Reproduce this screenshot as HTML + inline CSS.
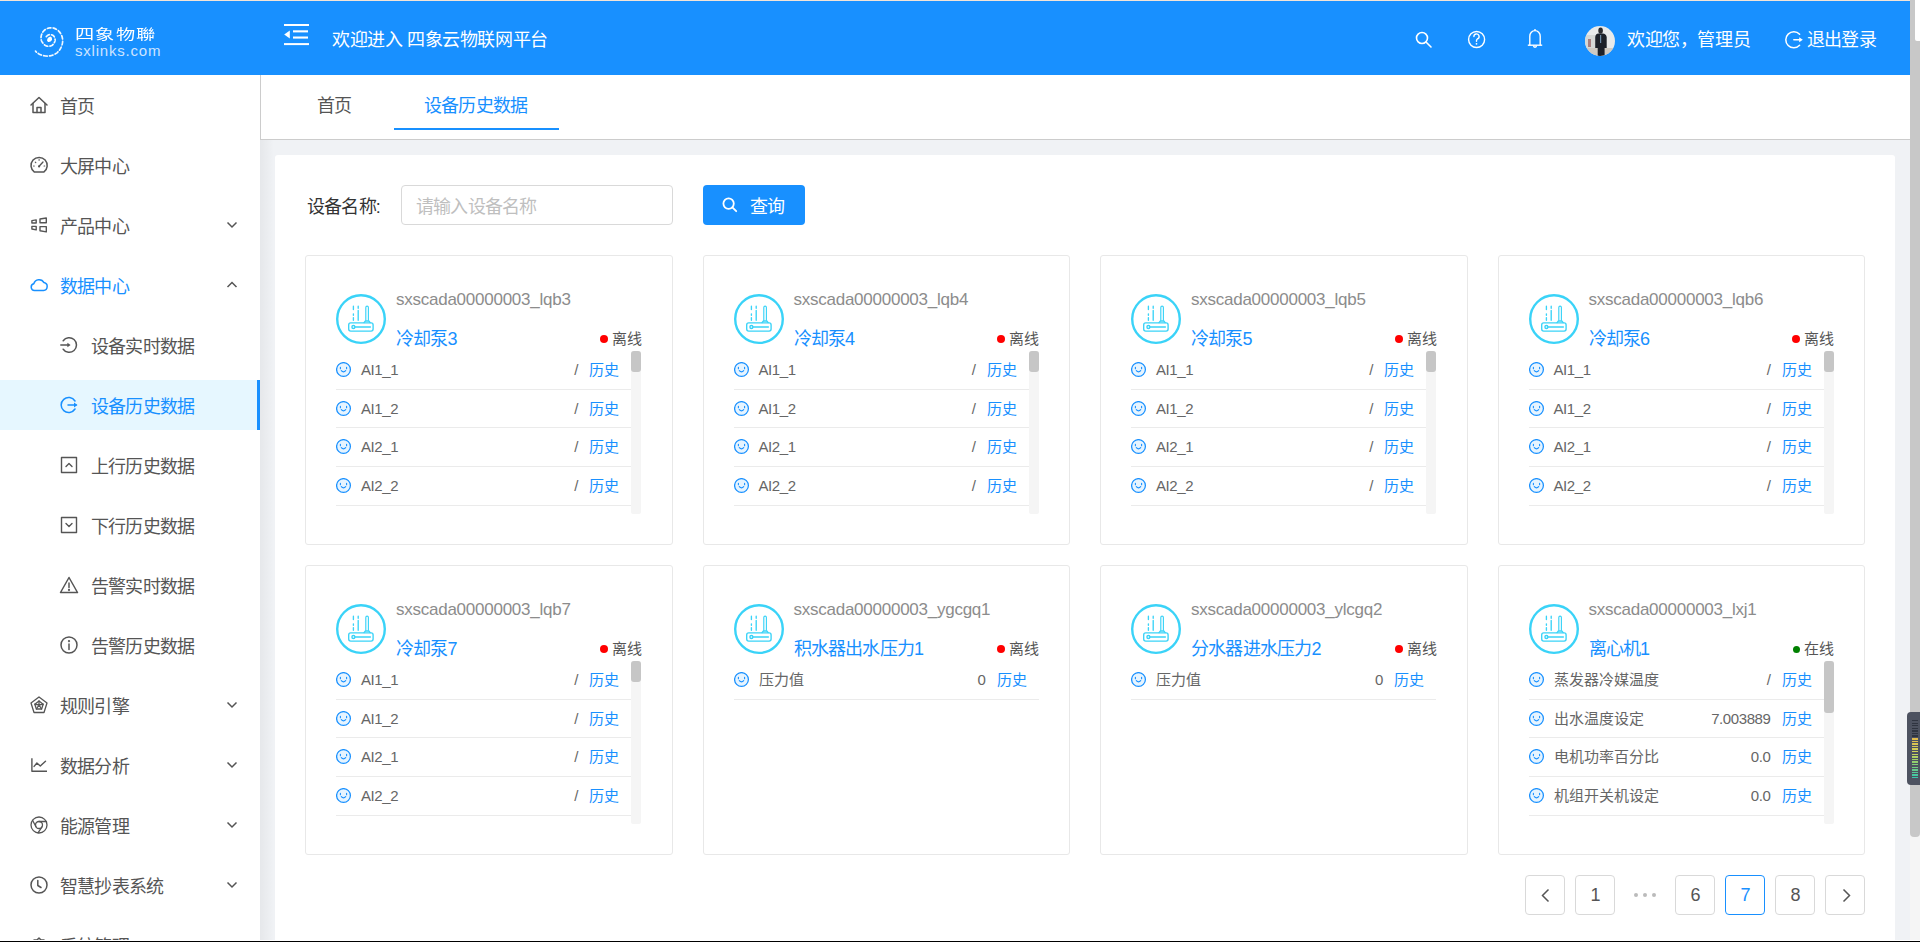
<!DOCTYPE html>
<html lang="zh-CN"><head><meta charset="utf-8"><style>*{box-sizing:border-box;margin:0;padding:0}
html,body{width:1920px;height:942px;overflow:hidden;background:#f0f2f5;font-family:"Liberation Sans",sans-serif;position:relative}
.abs{position:absolute}
#topline{left:0;top:0;width:1910px;height:1px;background:#f2e4d8}
#header{left:0;top:1px;width:1910px;height:74px;background:#1890ff;color:#fff}
#sidebar{left:0;top:75px;width:260px;height:867px;background:#fff}
.mi{position:absolute;left:0;width:260px;height:50px;font-size:18px;letter-spacing:-.8px;color:#555;line-height:50px;white-space:nowrap}
.mi .tx{position:absolute;left:60px;top:2px}
.mi.sub .tx{left:91px}
.mi svg{position:absolute}
.mi .chev{left:226px;top:20px}
.mi.sel,.mi.act{color:#1890ff}
.mi.sel{background:#e6f7ff}
.mi.sel:after{content:"";position:absolute;right:0;top:0;width:3px;height:50px;background:#1890ff}
#tabs{left:260px;top:75px;width:1650px;height:65px;background:#fff;border-left:1px solid #ccc;border-bottom:1px solid #ccc}
#shadow{left:260px;top:140px;width:14px;height:802px;background:linear-gradient(to right,rgba(0,0,0,.045),rgba(0,0,0,0))}
#main{left:275px;top:155px;width:1620px;height:800px;background:#fff;border-radius:3px}
#track{left:1910px;top:0;width:10px;height:942px;background:#f5f5f5}
#thumb{left:1910px;top:0;width:10px;height:837px;background:#c8c8c8;border-radius:0 0 4px 4px}
#botline{left:0;top:940px;width:1920px;height:2px;background:linear-gradient(#fff 50%,#000 50%)}
.card{position:absolute;width:367.5px;height:290px;border:1px solid #e8e8e8;border-radius:3px;background:#fff}
.card .ic{position:absolute;left:29px;top:38px}
.card .code{position:absolute;left:90px;top:34px;font-size:17px;color:#8c8c8c;white-space:nowrap;letter-spacing:-0.25px}
.card .name{position:absolute;left:90px;top:72px;font-size:18px;letter-spacing:-.8px;color:#1890ff;white-space:nowrap;line-height:22px}
.card .st{position:absolute;right:30px;top:74px;font-size:15px;color:#555;white-space:nowrap;line-height:18px}
.card .st i{display:inline-block;width:8px;height:8px;border-radius:4px;background:#f00;margin-right:4px;vertical-align:1px}
.card .st.on i{background:#008000;width:7px;height:7px}
.card .list{position:absolute;left:30px;top:95px;width:305px;height:163px;overflow:hidden}
.card .list.ns .row{width:305px}
.card .sb{position:absolute;right:0;top:0;width:10px;height:163px;background:#f5f5f5;border-radius:2px}
.card .sb b{position:absolute;left:0;top:0;width:10px;border-radius:3px;background:#c6c6c6}
.row{position:relative;width:295px;height:38.667px;border-bottom:1px solid #ebebeb;font-size:15px;color:#666;white-space:nowrap}
.row svg{position:absolute;left:0;top:11px}
.row .lb{position:absolute;left:25px;top:10px;line-height:18px}
.row .lb.lat,.row .vl{font-size:15px;letter-spacing:-.4px}
.row .vl{position:absolute;right:53px;top:10px;line-height:18px}
.row .hs{position:absolute;right:12px;top:10px;line-height:18px;color:#1890ff;font-size:15px}
.pg{position:absolute;top:875px;width:40px;height:40px;border:1px solid #d9d9d9;border-radius:4px;background:#fff;font-size:18px;letter-spacing:-.8px;color:#555;text-align:center;line-height:38px}
</style></head><body>
<div id="topline" class="abs"></div>
<div id="header" class="abs">
<svg class="abs" style="left:30px;top:20px" width="40" height="40" viewBox="0 0 40 40">
 <path d="M16.28 15.60 L16.44 15.42 L16.61 15.26 L16.78 15.10 L16.96 14.95 L17.14 14.79 L17.32 14.63 L17.51 14.48 L17.71 14.33 L17.92 14.20 L18.14 14.08 L18.37 13.97 L18.61 13.87 L18.85 13.79 L19.10 13.72 L19.36 13.66 L19.62 13.62 L19.88 13.60 L20.15 13.58 L20.43 13.59 L20.70 13.61 L20.97 13.64 L21.25 13.69 L21.52 13.76 L21.79 13.85 L22.06 13.94 L22.32 14.06 L22.58 14.19 L22.83 14.34 L23.07 14.50 L23.31 14.68 L23.54 14.87 L23.74 15.09 L23.94 15.32 L24.12 15.56 L24.28 15.82 L24.43 16.08 L24.57 16.35 L24.69 16.63 L24.80 16.92 L24.89 17.22 L24.97 17.52 L25.02 17.82 L25.06 18.13 L25.09 18.45 L25.09 18.76 L25.08 19.08 L25.05 19.39 L25.00 19.71 L24.93 20.02 L24.85 20.33 L24.75 20.64 L24.63 20.94 L24.49 21.23 L24.35 21.53 L24.22 21.84 L24.06 22.14 L23.88 22.43 L23.69 22.72 L23.47 22.99 L23.24 23.26 L22.99 23.51 L22.73 23.76 L22.45 23.99 L22.15 24.20 L21.84 24.40 L21.51 24.58 L21.17 24.74 L20.82 24.89 L20.45 25.02 L20.08 25.12 L19.70 25.21 L19.31 25.27 L18.91 25.31 L18.51 25.33 L18.11 25.30 L17.72 25.24 L17.32 25.16 L16.93 25.06 L16.54 24.93 L16.15 24.79 L15.78 24.62 L15.41 24.43 L15.05 24.21 L14.71 23.98 L14.37 23.73 L14.05 23.45 L13.75 23.16 L13.46 22.85 L13.18 22.52 L12.93 22.18 L12.69 21.82 L12.47 21.45 L12.23 21.08 L12.00 20.69 L11.80 20.29 L11.61 19.87 L11.45 19.44 L11.31 18.99 L11.20 18.53 L11.11 18.06 L11.05 17.59 L11.02 17.10 L11.02 16.61 L11.04 16.12 L11.09 15.62 L11.18 15.12 L11.29 14.62 L11.43 14.13 L11.58 13.62 L11.75 13.12 L11.95 12.61 L12.19 12.12 L12.45 11.63 L12.75 11.16 L13.08 10.69 L13.44 10.24 L13.84 9.81 L14.26 9.40 L14.71 9.01 L15.18 8.64 L15.69 8.30 L16.23 8.00 L16.78 7.74 L17.36 7.50 L17.96 7.30 L18.57 7.13 L19.19 6.99 L19.83 6.89 L20.48 6.82 L21.14 6.80 L21.80 6.81 L22.46 6.86 L23.13 6.96 L23.78 7.14 L24.41 7.35 L25.04 7.61 L25.65 7.89 L26.25 8.22 L26.84 8.58 L27.40 8.97 L27.94 9.40 L28.46 9.85 L28.95 10.34 L29.42 10.86 L29.87 11.39 L30.29 11.96 L30.67 12.55 L31.03 13.16 L31.35 13.80 L31.64 14.45 L31.89 15.13 L32.10 15.82 L32.27 16.52 L32.41 17.23 L32.51 17.96 L32.59 18.69 L32.62 19.43 L32.62 20.18 L32.57 20.93 L32.48 21.68 L32.35 22.42 L32.17 23.17 L31.95 23.90 L31.69 24.63 L31.40 25.35 L31.13 26.11 L30.81 26.85 L30.44 27.58 L30.03 28.30 L29.57 29.00 L29.06 29.68 L28.51 30.33 L27.92 30.96 L27.28 31.56 L26.59 32.10 L25.86 32.60 L25.09 33.05 L24.29 33.47 L23.47 33.84 L22.61 34.17 L21.74 34.45 L20.84 34.68 L19.92 34.85 L18.99 34.98 L18.04 35.04 L17.09 35.06 L16.13 35.02 L15.16 34.92 L14.20 34.77 L13.24 34.56 L12.29 34.30 L11.34 33.98 L10.41 33.60 L9.50 33.17 L8.61 32.68 L7.74 32.14 L6.90 31.55 L6.16 30.83 L5.48 30.06" fill="none" stroke="#fff" stroke-width="1.7" stroke-dasharray="3.6 2.3" stroke-linecap="round" opacity=".95"/>
 <path d="M17 19.5 Q17.5 16 20.5 15.6 Q22.6 16.6 22 19 Q20.5 21.5 18 21 Z" fill="#fff"/>
</svg>
<div class="abs" style="left:75px;top:25px;font-size:16px;line-height:20px;letter-spacing:.9px;transform:scale(1.2,.88);transform-origin:0 0;white-space:nowrap">四象物聯</div>
<div class="abs" style="left:75px;top:41px;font-size:15px;line-height:17px;color:#cde4ff;letter-spacing:0.8px">sxlinks.com</div>
<svg class="abs" style="left:283px;top:22px" width="28" height="24" viewBox="0 0 28 24">
 <rect x="1" y="1" width="25" height="2" fill="#fff"/>
 <rect x="10" y="7.3" width="15" height="2.1" fill="#fff"/>
 <rect x="10" y="13.5" width="15" height="2.1" fill="#fff"/>
 <rect x="1" y="20.1" width="25" height="2" fill="#fff"/>
 <path d="M1.2 11.5 L6.8 7.5 V15.5 Z" fill="#fff"/>
</svg>
<div class="abs" style="left:332px;top:27px;font-size:18px;letter-spacing:-.4px;line-height:24px;white-space:nowrap">欢迎进入 四象云物联网平台</div>
<svg class="abs" style="left:1412px;top:28px" width="24" height="22" viewBox="0 0 24 22"><g fill="none" stroke="#fff" stroke-width="1.6" stroke-linecap="round"><circle cx="10" cy="9" r="5.5"/><path d="M14 13 L19 18"/></g></svg>
<svg class="abs" style="left:1466px;top:27px" width="22" height="22" viewBox="0 0 22 22"><g fill="none" stroke="#fff" stroke-width="1.4" stroke-linecap="round"><circle cx="10.6" cy="11.5" r="8.0"/><path d="M7.9 8.6 A2.6 2.6 0 1 1 11.3 11 Q10.5 11.5 10.5 12.8 V13.3"/></g><circle cx="10.5" cy="15.8" r=".9" fill="#fff"/></svg>
<svg class="abs" style="left:1525px;top:26px" width="20" height="23" viewBox="0 0 20 23"><g fill="none" stroke="#fff" stroke-width="1.4" stroke-linejoin="round"><path d="M4.8 18.2 V9.2 A5.2 5.6 0 0 1 15.2 9.2 V18.2"/><path d="M2.8 18.2 H17.2"/><path d="M8.5 18.6 A1.5 1.6 0 0 0 11.5 18.6"/><path d="M10 2 V3.6"/></g></svg>
<svg class="abs" style="left:1585px;top:25px" width="30" height="30" viewBox="0 0 30 30">
 <defs><clipPath id="av"><circle cx="15" cy="15" r="15"/></clipPath></defs>
 <g clip-path="url(#av)">
  <rect width="30" height="30" fill="#e9eaea"/>
  <rect x="0" y="9" width="10" height="13" fill="#d6d8d6"/>
  <rect x="3" y="13" width="3" height="8" fill="#8a4444" opacity=".6"/>
  <rect x="0" y="22" width="30" height="8" fill="#cfcac2"/>
  <path d="M10.2 22 V11 Q10.5 8 13.5 7.6 H17.8 Q21 8 21.7 11 V22 H19.6 V30 H12.7 V22 Z" fill="#1d2129"/>
  <ellipse cx="15.6" cy="4.6" rx="2.3" ry="3.2" fill="#2a2b2f"/>
  <rect x="15" y="9" width="1.2" height="8" fill="#6b8aa6"/>
 </g>
</svg>
<div class="abs" style="left:1627px;top:27px;font-size:18px;letter-spacing:-.4px;line-height:24px;white-space:nowrap">欢迎您，管理员</div>
<svg class="abs" style="left:1784px;top:29px" width="22" height="21" viewBox="0 0 22 21"><g fill="none" stroke="#fff" stroke-width="1.5" stroke-linecap="round"><path d="M15.6 4.3 A8 8 0 1 0 15.6 15.3"/><path d="M9.8 9.8 H16"/></g><path d="M15.2 7.3 L18.8 9.8 L15.2 12.3 Z" fill="#fff"/></svg>
<div class="abs" style="left:1807px;top:27px;font-size:18px;letter-spacing:-.8px;line-height:24px;white-space:nowrap">退出登录</div>
</div>
<div id="sidebar" class="abs"><div class="mi" style="top:5px"><svg style="left:29px;top:15px" width="20" height="20" viewBox="0 0 20 20"><g fill="none" stroke="#555" stroke-width="1.5" stroke-linecap="round" stroke-linejoin="round"><path d="M2 10 L10 2.5 L18 10"/><path d="M4 8.5 V17.5 H16 V8.5"/><path d="M8 17.5 V12.5 H12 V17.5"/></g></svg><span class="tx">首页</span></div><div class="mi" style="top:65px"><svg style="left:29px;top:15px" width="20" height="20" viewBox="0 0 20 20"><g fill="none" stroke="#555" stroke-width="1.5" stroke-linecap="round" stroke-linejoin="round"><path d="M5.41 17.1 A8.1 8.1 0 1 1 14.79 17.1 Z"/><path d="M10.1 11.3 L14 7" stroke-width="1.3"/><path d="M4.6 11 h.6 M6.3 7.1 l.5 .5 M10.1 4.6 v.6 M15.1 11 h.6" stroke-width="1.2"/></g><circle cx="10.1" cy="11.4" r="1.1" fill="#555"/></svg><span class="tx">大屏中心</span></div><div class="mi" style="top:125px"><svg style="left:29px;top:15px" width="20" height="20" viewBox="0 0 20 20"><g fill="none" stroke="#555" stroke-width="1.4" stroke-linecap="round" stroke-linejoin="round"><path d="M2.9 5.6 L7.2 4.9 V8 H2.9 Z M11 4.0 L17.3 3.0 V7.8 H11 Z M2.9 11.4 H7.2 V14.9 L2.9 14 Z M11 11.6 H17.3 V16.9 L11 15.8 Z"/></g></svg><span class="tx">产品中心</span><svg class="chev" width="12" height="10" viewBox="0 0 12 10"><path d="M1.5 2.5 L6 7 L10.5 2.5" fill="none" stroke="#555" stroke-width="1.5"/></svg></div><div class="mi act" style="top:185px"><svg style="left:29px;top:15px" width="20" height="20" viewBox="0 0 20 20"><g fill="none" stroke="#1890ff" stroke-width="1.5" stroke-linecap="round" stroke-linejoin="round"><path d="M5.5 15.5 H14.5 A4 4 0 0 0 15 7.6 A5.5 5.5 0 0 0 4.8 8.8 A3.4 3.4 0 0 0 5.5 15.5 Z"/></g></svg><span class="tx">数据中心</span><svg class="chev" width="12" height="10" viewBox="0 0 12 10"><path d="M1.5 7 L6 2.5 L10.5 7" fill="none" stroke="#555" stroke-width="1.5"/></svg></div><div class="mi sub" style="top:245px"><svg style="left:59px;top:15px" width="20" height="20" viewBox="0 0 20 20"><g fill="none" stroke="#555" stroke-width="1.5" stroke-linecap="round" stroke-linejoin="round"><path d="M4.2 5.8 A7.3 7.3 0 1 1 4.2 14.2"/><path d="M1.8 10 H9"/></g><path d="M8.4 7.7 L11.6 10 L8.4 12.3 Z" fill="#555"/></svg><span class="tx">设备实时数据</span></div><div class="mi sub sel" style="top:305px"><svg style="left:59px;top:15px" width="20" height="20" viewBox="0 0 20 20"><g fill="none" stroke="#1890ff" stroke-width="1.5" stroke-linecap="round" stroke-linejoin="round"><path d="M16 6 A7.5 7.5 0 1 0 16 14"/><path d="M9 10 H17"/></g><path d="M15 7.5 L18.5 10 L15 12.5Z" fill="#1890ff"/></svg><span class="tx">设备历史数据</span></div><div class="mi sub" style="top:365px"><svg style="left:59px;top:15px" width="20" height="20" viewBox="0 0 20 20"><g fill="none" stroke="#555" stroke-width="1.4" stroke-linecap="round" stroke-linejoin="round"><rect x="2.5" y="2.5" width="15" height="15"/><path d="M7 11.5 L10 8.5 L13 11.5"/></g></svg><span class="tx">上行历史数据</span></div><div class="mi sub" style="top:425px"><svg style="left:59px;top:15px" width="20" height="20" viewBox="0 0 20 20"><g fill="none" stroke="#555" stroke-width="1.4" stroke-linecap="round" stroke-linejoin="round"><rect x="2.5" y="2.5" width="15" height="15"/><path d="M7 8.5 L10 11.5 L13 8.5"/></g></svg><span class="tx">下行历史数据</span></div><div class="mi sub" style="top:485px"><svg style="left:59px;top:15px" width="20" height="20" viewBox="0 0 20 20"><g fill="none" stroke="#555" stroke-width="1.5" stroke-linecap="round" stroke-linejoin="round"><path d="M10 2.5 L18.5 17.5 H1.5 Z"/><path d="M10 8 V12.5"/><circle cx="10" cy="15" r=".4"/></g></svg><span class="tx">告警实时数据</span></div><div class="mi sub" style="top:545px"><svg style="left:59px;top:15px" width="20" height="20" viewBox="0 0 20 20"><g fill="none" stroke="#555" stroke-width="1.5" stroke-linecap="round" stroke-linejoin="round"><circle cx="10" cy="10" r="8"/><path d="M10 9 V14.5"/><circle cx="10" cy="6.2" r=".4"/></g></svg><span class="tx">告警历史数据</span></div><div class="mi" style="top:605px"><svg style="left:29px;top:15px" width="20" height="20" viewBox="0 0 20 20"><g fill="none" stroke="#555" stroke-width="1.3" stroke-linecap="round" stroke-linejoin="round"><path d="M10 2 L18 8 L15 17.5 H5 L2 8 Z"/><path d="M10 6 L14.2 9.2 L12.6 14 H7.4 L5.8 9.2 Z"/><path d="M10 6 V10 M14.2 9.2 L10 10 M12.6 14 L10 10 M7.4 14 L10 10 M5.8 9.2 L10 10"/></g></svg><span class="tx">规则引擎</span><svg class="chev" width="12" height="10" viewBox="0 0 12 10"><path d="M1.5 2.5 L6 7 L10.5 2.5" fill="none" stroke="#555" stroke-width="1.5"/></svg></div><div class="mi" style="top:665px"><svg style="left:29px;top:15px" width="20" height="20" viewBox="0 0 20 20"><g fill="none" stroke="#555" stroke-width="1.4" stroke-linecap="round" stroke-linejoin="round"><path d="M2.9 3.3 V16.2 H18" stroke-linecap="butt"/><path d="M5.1 11.4 L7.9 8 L11.3 11 L16.5 6.2"/></g></svg><span class="tx">数据分析</span><svg class="chev" width="12" height="10" viewBox="0 0 12 10"><path d="M1.5 2.5 L6 7 L10.5 2.5" fill="none" stroke="#555" stroke-width="1.5"/></svg></div><div class="mi" style="top:725px"><svg style="left:29px;top:15px" width="20" height="20" viewBox="0 0 20 20"><g fill="none" stroke="#555" stroke-width="1.3" stroke-linecap="round" stroke-linejoin="round"><circle cx="10" cy="10" r="8"/><circle cx="10" cy="10" r="3.5"/><path d="M10 6.5 H17.5 M7 11.8 L3.5 5.2 M13 11.8 L9 17.8"/></g></svg><span class="tx">能源管理</span><svg class="chev" width="12" height="10" viewBox="0 0 12 10"><path d="M1.5 2.5 L6 7 L10.5 2.5" fill="none" stroke="#555" stroke-width="1.5"/></svg></div><div class="mi" style="top:785px"><svg style="left:29px;top:15px" width="20" height="20" viewBox="0 0 20 20"><g fill="none" stroke="#555" stroke-width="1.5" stroke-linecap="round" stroke-linejoin="round"><circle cx="10" cy="10" r="8"/><path d="M8.8 5.5 V10.5 L12 12.5"/></g></svg><span class="tx">智慧抄表系统</span><svg class="chev" width="12" height="10" viewBox="0 0 12 10"><path d="M1.5 2.5 L6 7 L10.5 2.5" fill="none" stroke="#555" stroke-width="1.5"/></svg></div><div class="mi" style="top:845px"><svg style="left:29px;top:15px" width="20" height="20" viewBox="0 0 20 20"><g fill="none" stroke="#555" stroke-width="1.5" stroke-linecap="round" stroke-linejoin="round"><path d="M10 3 L12 5 H15 V8 L17 10 L15 12 V15 H12 L10 17 L8 15 H5 V12 L3 10 L5 8 V5 H8 Z"/><circle cx="10" cy="10" r="2.5"/></g></svg><span class="tx">系统管理</span><svg class="chev" width="12" height="10" viewBox="0 0 12 10"><path d="M1.5 2.5 L6 7 L10.5 2.5" fill="none" stroke="#555" stroke-width="1.5"/></svg></div></div>
<div id="tabs" class="abs">
<div class="abs" style="left:56px;top:19px;font-size:18px;letter-spacing:-.8px;line-height:24px;color:#555">首页</div>
<div class="abs" style="left:163px;top:19px;font-size:18px;letter-spacing:-.8px;line-height:24px;color:#1890ff">设备历史数据</div>
<div class="abs" style="left:133px;top:53px;width:165px;height:2px;background:#1890ff"></div>
</div>
<div id="shadow" class="abs"></div>
<div id="main" class="abs">
<div class="abs" style="left:32px;top:40px;font-size:18px;letter-spacing:-.8px;line-height:24px;color:#333">设备名称:</div>
<div class="abs" style="left:126px;top:30px;width:272px;height:40px;border:1px solid #d9d9d9;border-radius:4px"></div>
<div class="abs" style="left:141px;top:40px;font-size:18px;letter-spacing:-.8px;line-height:24px;color:#bfbfbf">请输入设备名称</div>
<div class="abs" style="left:428px;top:30px;width:102px;height:40px;background:#1890ff;border-radius:4px"></div>
<svg class="abs" style="left:446px;top:41px" width="18" height="18" viewBox="0 0 18 18"><g fill="none" stroke="#fff" stroke-width="1.8" stroke-linecap="round"><circle cx="7.6" cy="7.6" r="5.2"/><path d="M11.4 11.4 L15.2 15.2"/></g></svg>
<div class="abs" style="left:475px;top:40px;font-size:18px;letter-spacing:-.8px;line-height:24px;color:#fff">查询</div>
</div>
<div class="card" style="left:305.0px;top:255px"><svg class="ic" width="52" height="52" viewBox="0 0 52 52"><circle cx="26" cy="25.1" r="23.8" fill="none" stroke="#3ad3f8" stroke-width="2.4"/><g fill="none" stroke="#3ad3f8" stroke-width="1.35" stroke-linecap="round"><rect x="13.7" y="28.9" width="24.4" height="8.2" rx="2"/><circle cx="18.4" cy="33" r="1.5"/><path d="M20 33 H35.4"/><path d="M29 28.6 l1.4 -1.6 h3.4 l1.4 1.6"/><path d="M18.4 12.2 V15.6 M18.4 19.8 V21.2 M18.4 23.6 V26.2"/><path d="M23.2 12.2 V14.2 M23.2 16.4 V26.2"/></g><path d="M30.8 26.8 V13.4 a1.3 1.3 0 0 1 2.6 0 V26.8" fill="none" stroke="#3ad3f8" stroke-width="1.15"/></svg><div class="code">sxscada00000003_lqb3</div><div class="name">冷却泵3</div><div class="st"><i></i>离线</div><div class="list"><div class="row"><svg width="16" height="16" viewBox="0 0 16 16"><circle cx="7.5" cy="7.5" r="6.9" fill="#e6f4ff" stroke="#1890ff" stroke-width="1.25"/><path d="M4.4 5.3 V6.7 M10.6 5.3 V6.7" stroke="#1890ff" stroke-width="1.1" stroke-linecap="round"/><path d="M5.3 8.6 Q7.5 11.2 9.7 8.6" fill="none" stroke="#1890ff" stroke-width="1.1" stroke-linecap="round"/></svg><span class="lb lat">AI1_1</span><span class="vl">/</span><span class="hs">历史</span></div><div class="row"><svg width="16" height="16" viewBox="0 0 16 16"><circle cx="7.5" cy="7.5" r="6.9" fill="#e6f4ff" stroke="#1890ff" stroke-width="1.25"/><path d="M4.4 5.3 V6.7 M10.6 5.3 V6.7" stroke="#1890ff" stroke-width="1.1" stroke-linecap="round"/><path d="M5.3 8.6 Q7.5 11.2 9.7 8.6" fill="none" stroke="#1890ff" stroke-width="1.1" stroke-linecap="round"/></svg><span class="lb lat">AI1_2</span><span class="vl">/</span><span class="hs">历史</span></div><div class="row"><svg width="16" height="16" viewBox="0 0 16 16"><circle cx="7.5" cy="7.5" r="6.9" fill="#e6f4ff" stroke="#1890ff" stroke-width="1.25"/><path d="M4.4 5.3 V6.7 M10.6 5.3 V6.7" stroke="#1890ff" stroke-width="1.1" stroke-linecap="round"/><path d="M5.3 8.6 Q7.5 11.2 9.7 8.6" fill="none" stroke="#1890ff" stroke-width="1.1" stroke-linecap="round"/></svg><span class="lb lat">AI2_1</span><span class="vl">/</span><span class="hs">历史</span></div><div class="row"><svg width="16" height="16" viewBox="0 0 16 16"><circle cx="7.5" cy="7.5" r="6.9" fill="#e6f4ff" stroke="#1890ff" stroke-width="1.25"/><path d="M4.4 5.3 V6.7 M10.6 5.3 V6.7" stroke="#1890ff" stroke-width="1.1" stroke-linecap="round"/><path d="M5.3 8.6 Q7.5 11.2 9.7 8.6" fill="none" stroke="#1890ff" stroke-width="1.1" stroke-linecap="round"/></svg><span class="lb lat">AI2_2</span><span class="vl">/</span><span class="hs">历史</span></div><div class="row"><svg width="16" height="16" viewBox="0 0 16 16"><circle cx="7.5" cy="7.5" r="6.9" fill="#e6f4ff" stroke="#1890ff" stroke-width="1.25"/><path d="M4.4 5.3 V6.7 M10.6 5.3 V6.7" stroke="#1890ff" stroke-width="1.1" stroke-linecap="round"/><path d="M5.3 8.6 Q7.5 11.2 9.7 8.6" fill="none" stroke="#1890ff" stroke-width="1.1" stroke-linecap="round"/></svg><span class="lb lat">AI3_1</span><span class="vl">/</span><span class="hs">历史</span></div><div class="sb"><b style="top:0px;height:21px"></b></div></div></div><div class="card" style="left:702.5px;top:255px"><svg class="ic" width="52" height="52" viewBox="0 0 52 52"><circle cx="26" cy="25.1" r="23.8" fill="none" stroke="#3ad3f8" stroke-width="2.4"/><g fill="none" stroke="#3ad3f8" stroke-width="1.35" stroke-linecap="round"><rect x="13.7" y="28.9" width="24.4" height="8.2" rx="2"/><circle cx="18.4" cy="33" r="1.5"/><path d="M20 33 H35.4"/><path d="M29 28.6 l1.4 -1.6 h3.4 l1.4 1.6"/><path d="M18.4 12.2 V15.6 M18.4 19.8 V21.2 M18.4 23.6 V26.2"/><path d="M23.2 12.2 V14.2 M23.2 16.4 V26.2"/></g><path d="M30.8 26.8 V13.4 a1.3 1.3 0 0 1 2.6 0 V26.8" fill="none" stroke="#3ad3f8" stroke-width="1.15"/></svg><div class="code">sxscada00000003_lqb4</div><div class="name">冷却泵4</div><div class="st"><i></i>离线</div><div class="list"><div class="row"><svg width="16" height="16" viewBox="0 0 16 16"><circle cx="7.5" cy="7.5" r="6.9" fill="#e6f4ff" stroke="#1890ff" stroke-width="1.25"/><path d="M4.4 5.3 V6.7 M10.6 5.3 V6.7" stroke="#1890ff" stroke-width="1.1" stroke-linecap="round"/><path d="M5.3 8.6 Q7.5 11.2 9.7 8.6" fill="none" stroke="#1890ff" stroke-width="1.1" stroke-linecap="round"/></svg><span class="lb lat">AI1_1</span><span class="vl">/</span><span class="hs">历史</span></div><div class="row"><svg width="16" height="16" viewBox="0 0 16 16"><circle cx="7.5" cy="7.5" r="6.9" fill="#e6f4ff" stroke="#1890ff" stroke-width="1.25"/><path d="M4.4 5.3 V6.7 M10.6 5.3 V6.7" stroke="#1890ff" stroke-width="1.1" stroke-linecap="round"/><path d="M5.3 8.6 Q7.5 11.2 9.7 8.6" fill="none" stroke="#1890ff" stroke-width="1.1" stroke-linecap="round"/></svg><span class="lb lat">AI1_2</span><span class="vl">/</span><span class="hs">历史</span></div><div class="row"><svg width="16" height="16" viewBox="0 0 16 16"><circle cx="7.5" cy="7.5" r="6.9" fill="#e6f4ff" stroke="#1890ff" stroke-width="1.25"/><path d="M4.4 5.3 V6.7 M10.6 5.3 V6.7" stroke="#1890ff" stroke-width="1.1" stroke-linecap="round"/><path d="M5.3 8.6 Q7.5 11.2 9.7 8.6" fill="none" stroke="#1890ff" stroke-width="1.1" stroke-linecap="round"/></svg><span class="lb lat">AI2_1</span><span class="vl">/</span><span class="hs">历史</span></div><div class="row"><svg width="16" height="16" viewBox="0 0 16 16"><circle cx="7.5" cy="7.5" r="6.9" fill="#e6f4ff" stroke="#1890ff" stroke-width="1.25"/><path d="M4.4 5.3 V6.7 M10.6 5.3 V6.7" stroke="#1890ff" stroke-width="1.1" stroke-linecap="round"/><path d="M5.3 8.6 Q7.5 11.2 9.7 8.6" fill="none" stroke="#1890ff" stroke-width="1.1" stroke-linecap="round"/></svg><span class="lb lat">AI2_2</span><span class="vl">/</span><span class="hs">历史</span></div><div class="row"><svg width="16" height="16" viewBox="0 0 16 16"><circle cx="7.5" cy="7.5" r="6.9" fill="#e6f4ff" stroke="#1890ff" stroke-width="1.25"/><path d="M4.4 5.3 V6.7 M10.6 5.3 V6.7" stroke="#1890ff" stroke-width="1.1" stroke-linecap="round"/><path d="M5.3 8.6 Q7.5 11.2 9.7 8.6" fill="none" stroke="#1890ff" stroke-width="1.1" stroke-linecap="round"/></svg><span class="lb lat">AI3_1</span><span class="vl">/</span><span class="hs">历史</span></div><div class="sb"><b style="top:0px;height:21px"></b></div></div></div><div class="card" style="left:1100.0px;top:255px"><svg class="ic" width="52" height="52" viewBox="0 0 52 52"><circle cx="26" cy="25.1" r="23.8" fill="none" stroke="#3ad3f8" stroke-width="2.4"/><g fill="none" stroke="#3ad3f8" stroke-width="1.35" stroke-linecap="round"><rect x="13.7" y="28.9" width="24.4" height="8.2" rx="2"/><circle cx="18.4" cy="33" r="1.5"/><path d="M20 33 H35.4"/><path d="M29 28.6 l1.4 -1.6 h3.4 l1.4 1.6"/><path d="M18.4 12.2 V15.6 M18.4 19.8 V21.2 M18.4 23.6 V26.2"/><path d="M23.2 12.2 V14.2 M23.2 16.4 V26.2"/></g><path d="M30.8 26.8 V13.4 a1.3 1.3 0 0 1 2.6 0 V26.8" fill="none" stroke="#3ad3f8" stroke-width="1.15"/></svg><div class="code">sxscada00000003_lqb5</div><div class="name">冷却泵5</div><div class="st"><i></i>离线</div><div class="list"><div class="row"><svg width="16" height="16" viewBox="0 0 16 16"><circle cx="7.5" cy="7.5" r="6.9" fill="#e6f4ff" stroke="#1890ff" stroke-width="1.25"/><path d="M4.4 5.3 V6.7 M10.6 5.3 V6.7" stroke="#1890ff" stroke-width="1.1" stroke-linecap="round"/><path d="M5.3 8.6 Q7.5 11.2 9.7 8.6" fill="none" stroke="#1890ff" stroke-width="1.1" stroke-linecap="round"/></svg><span class="lb lat">AI1_1</span><span class="vl">/</span><span class="hs">历史</span></div><div class="row"><svg width="16" height="16" viewBox="0 0 16 16"><circle cx="7.5" cy="7.5" r="6.9" fill="#e6f4ff" stroke="#1890ff" stroke-width="1.25"/><path d="M4.4 5.3 V6.7 M10.6 5.3 V6.7" stroke="#1890ff" stroke-width="1.1" stroke-linecap="round"/><path d="M5.3 8.6 Q7.5 11.2 9.7 8.6" fill="none" stroke="#1890ff" stroke-width="1.1" stroke-linecap="round"/></svg><span class="lb lat">AI1_2</span><span class="vl">/</span><span class="hs">历史</span></div><div class="row"><svg width="16" height="16" viewBox="0 0 16 16"><circle cx="7.5" cy="7.5" r="6.9" fill="#e6f4ff" stroke="#1890ff" stroke-width="1.25"/><path d="M4.4 5.3 V6.7 M10.6 5.3 V6.7" stroke="#1890ff" stroke-width="1.1" stroke-linecap="round"/><path d="M5.3 8.6 Q7.5 11.2 9.7 8.6" fill="none" stroke="#1890ff" stroke-width="1.1" stroke-linecap="round"/></svg><span class="lb lat">AI2_1</span><span class="vl">/</span><span class="hs">历史</span></div><div class="row"><svg width="16" height="16" viewBox="0 0 16 16"><circle cx="7.5" cy="7.5" r="6.9" fill="#e6f4ff" stroke="#1890ff" stroke-width="1.25"/><path d="M4.4 5.3 V6.7 M10.6 5.3 V6.7" stroke="#1890ff" stroke-width="1.1" stroke-linecap="round"/><path d="M5.3 8.6 Q7.5 11.2 9.7 8.6" fill="none" stroke="#1890ff" stroke-width="1.1" stroke-linecap="round"/></svg><span class="lb lat">AI2_2</span><span class="vl">/</span><span class="hs">历史</span></div><div class="row"><svg width="16" height="16" viewBox="0 0 16 16"><circle cx="7.5" cy="7.5" r="6.9" fill="#e6f4ff" stroke="#1890ff" stroke-width="1.25"/><path d="M4.4 5.3 V6.7 M10.6 5.3 V6.7" stroke="#1890ff" stroke-width="1.1" stroke-linecap="round"/><path d="M5.3 8.6 Q7.5 11.2 9.7 8.6" fill="none" stroke="#1890ff" stroke-width="1.1" stroke-linecap="round"/></svg><span class="lb lat">AI3_1</span><span class="vl">/</span><span class="hs">历史</span></div><div class="sb"><b style="top:0px;height:21px"></b></div></div></div><div class="card" style="left:1497.5px;top:255px"><svg class="ic" width="52" height="52" viewBox="0 0 52 52"><circle cx="26" cy="25.1" r="23.8" fill="none" stroke="#3ad3f8" stroke-width="2.4"/><g fill="none" stroke="#3ad3f8" stroke-width="1.35" stroke-linecap="round"><rect x="13.7" y="28.9" width="24.4" height="8.2" rx="2"/><circle cx="18.4" cy="33" r="1.5"/><path d="M20 33 H35.4"/><path d="M29 28.6 l1.4 -1.6 h3.4 l1.4 1.6"/><path d="M18.4 12.2 V15.6 M18.4 19.8 V21.2 M18.4 23.6 V26.2"/><path d="M23.2 12.2 V14.2 M23.2 16.4 V26.2"/></g><path d="M30.8 26.8 V13.4 a1.3 1.3 0 0 1 2.6 0 V26.8" fill="none" stroke="#3ad3f8" stroke-width="1.15"/></svg><div class="code">sxscada00000003_lqb6</div><div class="name">冷却泵6</div><div class="st"><i></i>离线</div><div class="list"><div class="row"><svg width="16" height="16" viewBox="0 0 16 16"><circle cx="7.5" cy="7.5" r="6.9" fill="#e6f4ff" stroke="#1890ff" stroke-width="1.25"/><path d="M4.4 5.3 V6.7 M10.6 5.3 V6.7" stroke="#1890ff" stroke-width="1.1" stroke-linecap="round"/><path d="M5.3 8.6 Q7.5 11.2 9.7 8.6" fill="none" stroke="#1890ff" stroke-width="1.1" stroke-linecap="round"/></svg><span class="lb lat">AI1_1</span><span class="vl">/</span><span class="hs">历史</span></div><div class="row"><svg width="16" height="16" viewBox="0 0 16 16"><circle cx="7.5" cy="7.5" r="6.9" fill="#e6f4ff" stroke="#1890ff" stroke-width="1.25"/><path d="M4.4 5.3 V6.7 M10.6 5.3 V6.7" stroke="#1890ff" stroke-width="1.1" stroke-linecap="round"/><path d="M5.3 8.6 Q7.5 11.2 9.7 8.6" fill="none" stroke="#1890ff" stroke-width="1.1" stroke-linecap="round"/></svg><span class="lb lat">AI1_2</span><span class="vl">/</span><span class="hs">历史</span></div><div class="row"><svg width="16" height="16" viewBox="0 0 16 16"><circle cx="7.5" cy="7.5" r="6.9" fill="#e6f4ff" stroke="#1890ff" stroke-width="1.25"/><path d="M4.4 5.3 V6.7 M10.6 5.3 V6.7" stroke="#1890ff" stroke-width="1.1" stroke-linecap="round"/><path d="M5.3 8.6 Q7.5 11.2 9.7 8.6" fill="none" stroke="#1890ff" stroke-width="1.1" stroke-linecap="round"/></svg><span class="lb lat">AI2_1</span><span class="vl">/</span><span class="hs">历史</span></div><div class="row"><svg width="16" height="16" viewBox="0 0 16 16"><circle cx="7.5" cy="7.5" r="6.9" fill="#e6f4ff" stroke="#1890ff" stroke-width="1.25"/><path d="M4.4 5.3 V6.7 M10.6 5.3 V6.7" stroke="#1890ff" stroke-width="1.1" stroke-linecap="round"/><path d="M5.3 8.6 Q7.5 11.2 9.7 8.6" fill="none" stroke="#1890ff" stroke-width="1.1" stroke-linecap="round"/></svg><span class="lb lat">AI2_2</span><span class="vl">/</span><span class="hs">历史</span></div><div class="row"><svg width="16" height="16" viewBox="0 0 16 16"><circle cx="7.5" cy="7.5" r="6.9" fill="#e6f4ff" stroke="#1890ff" stroke-width="1.25"/><path d="M4.4 5.3 V6.7 M10.6 5.3 V6.7" stroke="#1890ff" stroke-width="1.1" stroke-linecap="round"/><path d="M5.3 8.6 Q7.5 11.2 9.7 8.6" fill="none" stroke="#1890ff" stroke-width="1.1" stroke-linecap="round"/></svg><span class="lb lat">AI3_1</span><span class="vl">/</span><span class="hs">历史</span></div><div class="sb"><b style="top:0px;height:21px"></b></div></div></div><div class="card" style="left:305.0px;top:565px"><svg class="ic" width="52" height="52" viewBox="0 0 52 52"><circle cx="26" cy="25.1" r="23.8" fill="none" stroke="#3ad3f8" stroke-width="2.4"/><g fill="none" stroke="#3ad3f8" stroke-width="1.35" stroke-linecap="round"><rect x="13.7" y="28.9" width="24.4" height="8.2" rx="2"/><circle cx="18.4" cy="33" r="1.5"/><path d="M20 33 H35.4"/><path d="M29 28.6 l1.4 -1.6 h3.4 l1.4 1.6"/><path d="M18.4 12.2 V15.6 M18.4 19.8 V21.2 M18.4 23.6 V26.2"/><path d="M23.2 12.2 V14.2 M23.2 16.4 V26.2"/></g><path d="M30.8 26.8 V13.4 a1.3 1.3 0 0 1 2.6 0 V26.8" fill="none" stroke="#3ad3f8" stroke-width="1.15"/></svg><div class="code">sxscada00000003_lqb7</div><div class="name">冷却泵7</div><div class="st"><i></i>离线</div><div class="list"><div class="row"><svg width="16" height="16" viewBox="0 0 16 16"><circle cx="7.5" cy="7.5" r="6.9" fill="#e6f4ff" stroke="#1890ff" stroke-width="1.25"/><path d="M4.4 5.3 V6.7 M10.6 5.3 V6.7" stroke="#1890ff" stroke-width="1.1" stroke-linecap="round"/><path d="M5.3 8.6 Q7.5 11.2 9.7 8.6" fill="none" stroke="#1890ff" stroke-width="1.1" stroke-linecap="round"/></svg><span class="lb lat">AI1_1</span><span class="vl">/</span><span class="hs">历史</span></div><div class="row"><svg width="16" height="16" viewBox="0 0 16 16"><circle cx="7.5" cy="7.5" r="6.9" fill="#e6f4ff" stroke="#1890ff" stroke-width="1.25"/><path d="M4.4 5.3 V6.7 M10.6 5.3 V6.7" stroke="#1890ff" stroke-width="1.1" stroke-linecap="round"/><path d="M5.3 8.6 Q7.5 11.2 9.7 8.6" fill="none" stroke="#1890ff" stroke-width="1.1" stroke-linecap="round"/></svg><span class="lb lat">AI1_2</span><span class="vl">/</span><span class="hs">历史</span></div><div class="row"><svg width="16" height="16" viewBox="0 0 16 16"><circle cx="7.5" cy="7.5" r="6.9" fill="#e6f4ff" stroke="#1890ff" stroke-width="1.25"/><path d="M4.4 5.3 V6.7 M10.6 5.3 V6.7" stroke="#1890ff" stroke-width="1.1" stroke-linecap="round"/><path d="M5.3 8.6 Q7.5 11.2 9.7 8.6" fill="none" stroke="#1890ff" stroke-width="1.1" stroke-linecap="round"/></svg><span class="lb lat">AI2_1</span><span class="vl">/</span><span class="hs">历史</span></div><div class="row"><svg width="16" height="16" viewBox="0 0 16 16"><circle cx="7.5" cy="7.5" r="6.9" fill="#e6f4ff" stroke="#1890ff" stroke-width="1.25"/><path d="M4.4 5.3 V6.7 M10.6 5.3 V6.7" stroke="#1890ff" stroke-width="1.1" stroke-linecap="round"/><path d="M5.3 8.6 Q7.5 11.2 9.7 8.6" fill="none" stroke="#1890ff" stroke-width="1.1" stroke-linecap="round"/></svg><span class="lb lat">AI2_2</span><span class="vl">/</span><span class="hs">历史</span></div><div class="row"><svg width="16" height="16" viewBox="0 0 16 16"><circle cx="7.5" cy="7.5" r="6.9" fill="#e6f4ff" stroke="#1890ff" stroke-width="1.25"/><path d="M4.4 5.3 V6.7 M10.6 5.3 V6.7" stroke="#1890ff" stroke-width="1.1" stroke-linecap="round"/><path d="M5.3 8.6 Q7.5 11.2 9.7 8.6" fill="none" stroke="#1890ff" stroke-width="1.1" stroke-linecap="round"/></svg><span class="lb lat">AI3_1</span><span class="vl">/</span><span class="hs">历史</span></div><div class="sb"><b style="top:0px;height:21px"></b></div></div></div><div class="card" style="left:702.5px;top:565px"><svg class="ic" width="52" height="52" viewBox="0 0 52 52"><circle cx="26" cy="25.1" r="23.8" fill="none" stroke="#3ad3f8" stroke-width="2.4"/><g fill="none" stroke="#3ad3f8" stroke-width="1.35" stroke-linecap="round"><rect x="13.7" y="28.9" width="24.4" height="8.2" rx="2"/><circle cx="18.4" cy="33" r="1.5"/><path d="M20 33 H35.4"/><path d="M29 28.6 l1.4 -1.6 h3.4 l1.4 1.6"/><path d="M18.4 12.2 V15.6 M18.4 19.8 V21.2 M18.4 23.6 V26.2"/><path d="M23.2 12.2 V14.2 M23.2 16.4 V26.2"/></g><path d="M30.8 26.8 V13.4 a1.3 1.3 0 0 1 2.6 0 V26.8" fill="none" stroke="#3ad3f8" stroke-width="1.15"/></svg><div class="code">sxscada00000003_ygcgq1</div><div class="name">积水器出水压力1</div><div class="st"><i></i>离线</div><div class="list ns"><div class="row"><svg width="16" height="16" viewBox="0 0 16 16"><circle cx="7.5" cy="7.5" r="6.9" fill="#e6f4ff" stroke="#1890ff" stroke-width="1.25"/><path d="M4.4 5.3 V6.7 M10.6 5.3 V6.7" stroke="#1890ff" stroke-width="1.1" stroke-linecap="round"/><path d="M5.3 8.6 Q7.5 11.2 9.7 8.6" fill="none" stroke="#1890ff" stroke-width="1.1" stroke-linecap="round"/></svg><span class="lb">压力值</span><span class="vl">0</span><span class="hs">历史</span></div></div></div><div class="card" style="left:1100.0px;top:565px"><svg class="ic" width="52" height="52" viewBox="0 0 52 52"><circle cx="26" cy="25.1" r="23.8" fill="none" stroke="#3ad3f8" stroke-width="2.4"/><g fill="none" stroke="#3ad3f8" stroke-width="1.35" stroke-linecap="round"><rect x="13.7" y="28.9" width="24.4" height="8.2" rx="2"/><circle cx="18.4" cy="33" r="1.5"/><path d="M20 33 H35.4"/><path d="M29 28.6 l1.4 -1.6 h3.4 l1.4 1.6"/><path d="M18.4 12.2 V15.6 M18.4 19.8 V21.2 M18.4 23.6 V26.2"/><path d="M23.2 12.2 V14.2 M23.2 16.4 V26.2"/></g><path d="M30.8 26.8 V13.4 a1.3 1.3 0 0 1 2.6 0 V26.8" fill="none" stroke="#3ad3f8" stroke-width="1.15"/></svg><div class="code">sxscada00000003_ylcgq2</div><div class="name">分水器进水压力2</div><div class="st"><i></i>离线</div><div class="list ns"><div class="row"><svg width="16" height="16" viewBox="0 0 16 16"><circle cx="7.5" cy="7.5" r="6.9" fill="#e6f4ff" stroke="#1890ff" stroke-width="1.25"/><path d="M4.4 5.3 V6.7 M10.6 5.3 V6.7" stroke="#1890ff" stroke-width="1.1" stroke-linecap="round"/><path d="M5.3 8.6 Q7.5 11.2 9.7 8.6" fill="none" stroke="#1890ff" stroke-width="1.1" stroke-linecap="round"/></svg><span class="lb">压力值</span><span class="vl">0</span><span class="hs">历史</span></div></div></div><div class="card" style="left:1497.5px;top:565px"><svg class="ic" width="52" height="52" viewBox="0 0 52 52"><circle cx="26" cy="25.1" r="23.8" fill="none" stroke="#3ad3f8" stroke-width="2.4"/><g fill="none" stroke="#3ad3f8" stroke-width="1.35" stroke-linecap="round"><rect x="13.7" y="28.9" width="24.4" height="8.2" rx="2"/><circle cx="18.4" cy="33" r="1.5"/><path d="M20 33 H35.4"/><path d="M29 28.6 l1.4 -1.6 h3.4 l1.4 1.6"/><path d="M18.4 12.2 V15.6 M18.4 19.8 V21.2 M18.4 23.6 V26.2"/><path d="M23.2 12.2 V14.2 M23.2 16.4 V26.2"/></g><path d="M30.8 26.8 V13.4 a1.3 1.3 0 0 1 2.6 0 V26.8" fill="none" stroke="#3ad3f8" stroke-width="1.15"/></svg><div class="code">sxscada00000003_lxj1</div><div class="name">离心机1</div><div class="st on"><i></i>在线</div><div class="list"><div class="row"><svg width="16" height="16" viewBox="0 0 16 16"><circle cx="7.5" cy="7.5" r="6.9" fill="#e6f4ff" stroke="#1890ff" stroke-width="1.25"/><path d="M4.4 5.3 V6.7 M10.6 5.3 V6.7" stroke="#1890ff" stroke-width="1.1" stroke-linecap="round"/><path d="M5.3 8.6 Q7.5 11.2 9.7 8.6" fill="none" stroke="#1890ff" stroke-width="1.1" stroke-linecap="round"/></svg><span class="lb">蒸发器冷媒温度</span><span class="vl">/</span><span class="hs">历史</span></div><div class="row"><svg width="16" height="16" viewBox="0 0 16 16"><circle cx="7.5" cy="7.5" r="6.9" fill="#e6f4ff" stroke="#1890ff" stroke-width="1.25"/><path d="M4.4 5.3 V6.7 M10.6 5.3 V6.7" stroke="#1890ff" stroke-width="1.1" stroke-linecap="round"/><path d="M5.3 8.6 Q7.5 11.2 9.7 8.6" fill="none" stroke="#1890ff" stroke-width="1.1" stroke-linecap="round"/></svg><span class="lb">出水温度设定</span><span class="vl">7.003889</span><span class="hs">历史</span></div><div class="row"><svg width="16" height="16" viewBox="0 0 16 16"><circle cx="7.5" cy="7.5" r="6.9" fill="#e6f4ff" stroke="#1890ff" stroke-width="1.25"/><path d="M4.4 5.3 V6.7 M10.6 5.3 V6.7" stroke="#1890ff" stroke-width="1.1" stroke-linecap="round"/><path d="M5.3 8.6 Q7.5 11.2 9.7 8.6" fill="none" stroke="#1890ff" stroke-width="1.1" stroke-linecap="round"/></svg><span class="lb">电机功率百分比</span><span class="vl">0.0</span><span class="hs">历史</span></div><div class="row"><svg width="16" height="16" viewBox="0 0 16 16"><circle cx="7.5" cy="7.5" r="6.9" fill="#e6f4ff" stroke="#1890ff" stroke-width="1.25"/><path d="M4.4 5.3 V6.7 M10.6 5.3 V6.7" stroke="#1890ff" stroke-width="1.1" stroke-linecap="round"/><path d="M5.3 8.6 Q7.5 11.2 9.7 8.6" fill="none" stroke="#1890ff" stroke-width="1.1" stroke-linecap="round"/></svg><span class="lb">机组开关机设定</span><span class="vl">0.0</span><span class="hs">历史</span></div><div class="row"><svg width="16" height="16" viewBox="0 0 16 16"><circle cx="7.5" cy="7.5" r="6.9" fill="#e6f4ff" stroke="#1890ff" stroke-width="1.25"/><path d="M4.4 5.3 V6.7 M10.6 5.3 V6.7" stroke="#1890ff" stroke-width="1.1" stroke-linecap="round"/><path d="M5.3 8.6 Q7.5 11.2 9.7 8.6" fill="none" stroke="#1890ff" stroke-width="1.1" stroke-linecap="round"/></svg><span class="lb">机组运行状态</span><span class="vl">0.0</span><span class="hs">历史</span></div><div class="sb"><b style="top:0px;height:52px"></b></div></div></div>
<div class="pg" style="left:1525px"><svg style="position:absolute;left:9.5px;top:7px" width="20" height="25" viewBox="0 0 20 25"><path d="M12.5 6.5 L6.5 12.5 L12.5 18.5" fill="none" stroke="#555" stroke-width="1.5"/></svg></div><div class="pg" style="left:1575px;">1</div><div class="pg" style="left:1675px;">6</div><div class="pg" style="left:1725px;border-color:#1890ff;color:#1890ff">7</div><div class="pg" style="left:1775px;">8</div><div class="pg" style="left:1825px"><svg style="position:absolute;left:9.5px;top:7px" width="20" height="25" viewBox="0 0 20 25"><path d="M7.5 6.5 L13.5 12.5 L7.5 18.5" fill="none" stroke="#555" stroke-width="1.5"/></svg></div><div class="abs" style="left:1634px;top:893px;width:24px;height:4px"><i style="position:absolute;left:0;top:0;width:4px;height:4px;border-radius:2px;background:#bbb"></i><i style="position:absolute;left:9px;top:0;width:4px;height:4px;border-radius:2px;background:#bbb"></i><i style="position:absolute;left:18px;top:0;width:4px;height:4px;border-radius:2px;background:#bbb"></i></div>
<div id="track" class="abs"></div><div id="thumb" class="abs"></div>
<div class="abs" style="left:1915px;top:0;width:5px;height:41px;background:#fff;border-radius:0 0 0 2px"></div>
<div class="abs" style="left:1907px;top:712px;width:13px;height:73px;background:#4d5260;border-radius:4px 0 0 4px"></div>
<div class="abs" style="left:1911.5px;top:720px;width:6px;height:17px;background:repeating-linear-gradient(to bottom,#2f3440 0,#2f3440 1.4px,transparent 1.4px,transparent 2.55px)"></div>
<div class="abs" style="left:1911.5px;top:738px;width:6px;height:40px;background:linear-gradient(to bottom,#e2b94c,#cfd45a 35%,#86cf72 65%,#36c8ad);-webkit-mask:repeating-linear-gradient(to bottom,#000 0,#000 1.5px,transparent 1.5px,transparent 2.6px)"></div>
<div id="botline" class="abs"></div>
</body></html>
